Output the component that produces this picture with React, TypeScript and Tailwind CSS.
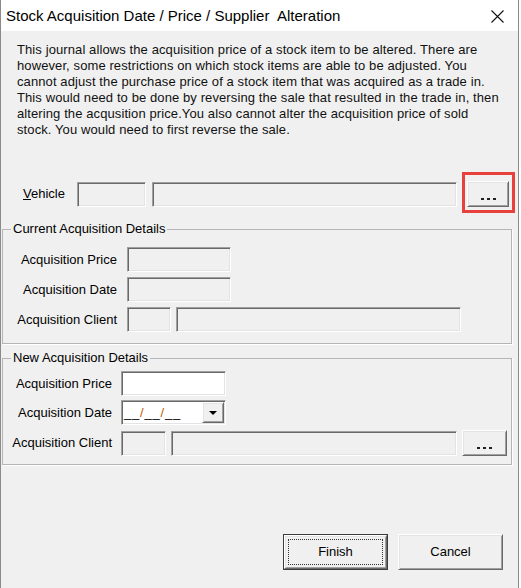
import React from "react";

const font = { fontFamily: '"Liberation Sans", Arial, sans-serif' };

const sunken =
  "border border-t-[#a0a0a0] border-l-[#a0a0a0] border-r-white border-b-white shadow-[inset_1px_1px_0_#696969,inset_-1px_-1px_0_#e3e3e3]";
const raised =
  "border border-t-white border-l-white border-r-[#696969] border-b-[#696969] shadow-[inset_1px_1px_0_#e3e3e3,inset_-1px_-1px_0_#a0a0a0] bg-[#f0f0f0]";

function Dots() {
  return (
    <div className="flex items-end justify-center gap-[3px] pb-[6px] h-full">
      <span className="w-[3px] h-[2px] bg-[#202020]" />
      <span className="w-[3px] h-[2px] bg-[#202020]" />
      <span className="w-[3px] h-[2px] bg-[#202020]" />
    </div>
  );
}

export default function App() {
  return (
    <div className="w-[521px] h-[588px] bg-white overflow-hidden relative text-[13px] text-black" style={font}>
      <div className="w-[519px] h-full border-x border-[#8a8a8a] flex flex-col">
        {/* Title bar */}
        <div className="h-[31px] bg-white flex items-center justify-between shrink-0">
          <div className="pl-[5px] text-[15px] leading-[16px] pt-[1px]">Stock Acquisition Date / Price / Supplier&nbsp; Alteration</div>
          <div className="pr-[14px] pt-[1px]">
            <svg width="13" height="13" viewBox="0 0 13 13">
              <path d="M0.5 0.5 L12.5 12.5 M12.5 0.5 L0.5 12.5" stroke="#111" strokeWidth="1.1" fill="none" />
            </svg>
          </div>
        </div>
        {/* Body */}
        <div className="flex-1 bg-[#f0f0f0] flex flex-col pt-[11px]">
          <div className="pl-[16px] leading-[16px] text-[#111] tracking-[0.1px]">
            <div>This journal allows the acquisition price of a stock item to be altered. There are</div>
            <div>however, some restrictions on which stock items are able to be adjusted. You</div>
            <div>cannot adjust the purchase price of a stock item that was acquired as a trade in.</div>
            <div>This would need to be done by reversing the sale that resulted in the trade in, then</div>
            <div>altering the acqusition price.You also cannot alter the acquisition price of sold</div>
            <div>stock. You would need to first reverse the sale.</div>
          </div>

          {/* Vehicle row */}
          <div className="mt-[43px] flex items-center pl-[22px] h-[26px]">
            <div className="w-[54px]">
              <span className="underline">V</span>ehicle
            </div>
            <div className={`w-[69px] h-[25px] ${sunken}`} />
            <div className={`ml-[6px] w-[305px] h-[25px] ${sunken}`} />
            <div className={`ml-[10px] w-[42px] h-[26px] ${raised}`}>
              <Dots />
            </div>
          </div>

          {/* Current Acquisition Details */}
          <fieldset className="mt-[14px] ml-[1px] w-[510px] border border-[#b5b5b5] shadow-[1px_1px_0_#fff] pt-[10px] pb-[11px] px-0 m-0">
            <legend className="ml-[8px] px-[2px] leading-[16px]">Current Acquisition Details</legend>
            <div className="flex flex-col gap-[5px]">
              <div className="flex items-center">
                <div className="w-[124px] pr-[10px] text-right">Acquisition Price</div>
                <div className={`w-[104px] h-[25px] ${sunken}`} />
              </div>
              <div className="flex items-center">
                <div className="w-[124px] pr-[10px] text-right">Acquisition Date</div>
                <div className={`w-[104px] h-[25px] ${sunken}`} />
              </div>
              <div className="flex items-center">
                <div className="w-[124px] pr-[10px] text-right">Acquisition Client</div>
                <div className={`w-[44px] h-[25px] ${sunken}`} />
                <div className={`ml-[5px] w-[285px] h-[25px] ${sunken}`} />
              </div>
            </div>
          </fieldset>

          {/* New Acquisition Details */}
          <fieldset className="mt-[6px] ml-[1px] w-[510px] border border-[#b5b5b5] shadow-[1px_1px_0_#fff] pt-[5px] pb-[8px] px-0 m-0">
            <legend className="ml-[8px] px-[2px] leading-[16px]">New Acquisition Details</legend>
            <div className="flex flex-col">
              <div className="flex items-center">
                <div className="w-[118px] pr-[9px] text-right">Acquisition Price</div>
                <div className={`w-[105px] h-[25px] bg-white ${sunken}`} />
              </div>
              <div className="flex items-center mt-[4px]">
                <div className="w-[118px] pr-[9px] text-right">Acquisition Date</div>
                <div className={`w-[105px] h-[25px] bg-white ${sunken} flex items-center justify-between pl-[2px] pr-[1px]`}>
                  <span className="leading-[16px] tracking-[0.8px]">
                    __<span className="text-[#c25a00]">/</span>__<span className="text-[#c25a00]">/</span>__
                  </span>
                  <div className={`w-[22px] h-[21px] ${raised} flex items-center justify-center`}>
                    <svg width="8" height="4" viewBox="0 0 8 4">
                      <path d="M0 0 H8 L4 4 Z" fill="#000" />
                    </svg>
                  </div>
                </div>
              </div>
              <div className="flex items-center mt-[5px]">
                <div className="w-[118px] pr-[9px] text-right">Acquisition Client</div>
                <div className={`w-[45px] h-[25px] ${sunken}`} />
                <div className={`ml-[5px] w-[286px] h-[25px] ${sunken}`} />
                <div className={`ml-[5px] w-[45px] h-[26px] ${raised}`}>
                  <Dots />
                </div>
              </div>
            </div>
          </fieldset>

          {/* Bottom buttons */}
          <div className="mt-[69px] flex justify-end gap-[10px] pr-[15px]">
            <div className="w-[105px] h-[36px] border border-[#3c3c3c] p-0">
              <div className={`w-full h-full ${raised} flex items-center justify-center relative`}>
                <div className="absolute inset-[3px] border border-dotted border-[#333]" />
                <span>Finish</span>
              </div>
            </div>
            <div className={`w-[105px] h-[36px] ${raised} flex items-center justify-center`}>
              <span>Cancel</span>
            </div>
          </div>
        </div>
      </div>

      {/* Red annotation box */}
      <div className="absolute left-[462px] top-[172px] w-[53px] h-[41px] border-[3px] border-[#e8413c]" />
    </div>
  );
}
